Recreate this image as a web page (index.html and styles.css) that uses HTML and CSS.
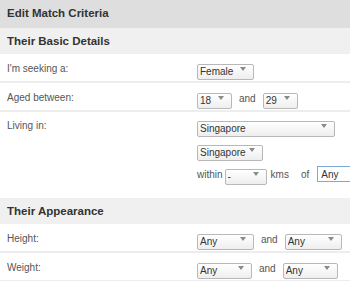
FILE: index.html
```html
<!DOCTYPE html>
<html>
<head>
    <title>Edit Match Criteria</title>
    <link rel="stylesheet" href="styles.css">
</head>
<body>
    <div class="panel">
        <div class="panel-title">Edit Match Criteria</div>

        <div class="section-head">Their Basic Details</div>

        <div class="row">
            <div class="label">I'm seeking a:</div>
            <div class="controls">
                <div class="line">
                    <span class="sel w-57"><select><option>Female</option></select></span>
                </div>
            </div>
        </div>

        <div class="row">
            <div class="label">Aged between:</div>
            <div class="controls">
                <div class="line">
                    <span class="sel w-35"><select><option>18</option></select></span>
                    <span class="word">and</span>
                    <span class="sel w-35"><select><option>29</option></select></span>
                </div>
            </div>
        </div>

        <div class="row row-last">
            <div class="label">Living in:</div>
            <div class="controls">
                <div class="line">
                    <span class="sel w-138"><select><option>Singapore</option></select></span>
                </div>
                <div class="line">
                    <span class="sel w-66"><select><option>Singapore</option></select></span>
                </div>
                <div class="line">
                    <span class="word word-tight">within</span>
                    <span class="sel w-42"><select><option>-</option></select></span>
                    <span class="word word-kms">kms</span>
                    <span class="word word-of">of</span>
                    <input class="text-input" type="text" value="Any">
                </div>
            </div>
        </div>

        <div class="section-head">Their Appearance</div>

        <div class="row">
            <div class="label">Height:</div>
            <div class="controls">
                <div class="line">
                    <span class="sel w-57"><select><option>Any</option></select></span>
                    <span class="word">and</span>
                    <span class="sel w-57"><select><option>Any</option></select></span>
                </div>
            </div>
        </div>

        <div class="row">
            <div class="label">Weight:</div>
            <div class="controls">
                <div class="line">
                    <span class="sel w-55"><select><option>Any</option></select></span>
                    <span class="word">and</span>
                    <span class="sel w-55"><select><option>Any</option></select></span>
                </div>
            </div>
        </div>
    </div>
</body>
</html>
```

FILE: styles.css
```css
body { margin: 0; font-family: "Liberation Sans", Arial, sans-serif; color: #444; background: #fff; }

.panel { width: 350px; overflow: hidden; }

.panel-title {
    background: #dedede;
    color: #333;
    font-weight: bold;
    font-size: 11.5px;
    height: 28px;
    line-height: 27px;
    padding-left: 7px;
}

.section-head {
    background: #f0f0f0;
    color: #333;
    font-weight: bold;
    font-size: 11.5px;
    height: 26px;
    line-height: 27px;
    padding-left: 7px;
}

.row {
    display: flex;
    align-items: flex-start;
    padding: 7px 0 4px;
    border-bottom: 2px solid #ededed;
}
.row-last { border-bottom: none; padding: 6px 0 16px; }

.label {
    width: 190px;
    flex: none;
    padding-left: 7px;
    font-size: 10px;
    line-height: 16px;
    color: #555;
}

.controls {
    display: flex;
    flex-direction: column;
    gap: 8px;
    white-space: nowrap;
}

.line { display: flex; align-items: center; height: 16px; }

.word { font-size: 10px; color: #555; margin: 0 7px; }
.word-tight { margin: 0 2px 0 0; }
.word-kms { margin: 0 0 0 4px; }
.word-of { margin: 0 8px 0 12px; }

.sel {
    position: relative;
    display: inline-block;
    height: 16px;
}
.sel select {
    appearance: none;
    -webkit-appearance: none;
    width: 100%;
    height: 16px;
    margin: 0;
    padding: 0 0 0 2px;
    border: 1px solid #b8b8b8;
    border-radius: 2px;
    background: linear-gradient(#ffffff, #eeeeee);
    font-family: "Liberation Sans", Arial, sans-serif;
    font-size: 10px;
    color: #333;
    line-height: 14px;
    box-sizing: border-box;
}
.sel::after {
    content: "";
    position: absolute;
    right: 8px;
    top: 6px;
    border-left: 3.5px solid transparent;
    border-right: 3.5px solid transparent;
    border-top: 4px solid #8a8a8a;
    pointer-events: none;
}

.w-35 { width: 35px; }
.w-42 { width: 42px; }
.w-55 { width: 55px; }
.w-57 { width: 57px; }
.w-66 { width: 66px; }
.w-138 { width: 138px; }

.text-input {
    width: 80px;
    height: 16px;
    margin: 0;
    padding: 0 0 0 3px;
    border: 1px solid #7eaad8;
    box-sizing: border-box;
    font-family: "Liberation Sans", Arial, sans-serif;
    font-size: 10px;
    color: #333;
    flex: none;
}
```
